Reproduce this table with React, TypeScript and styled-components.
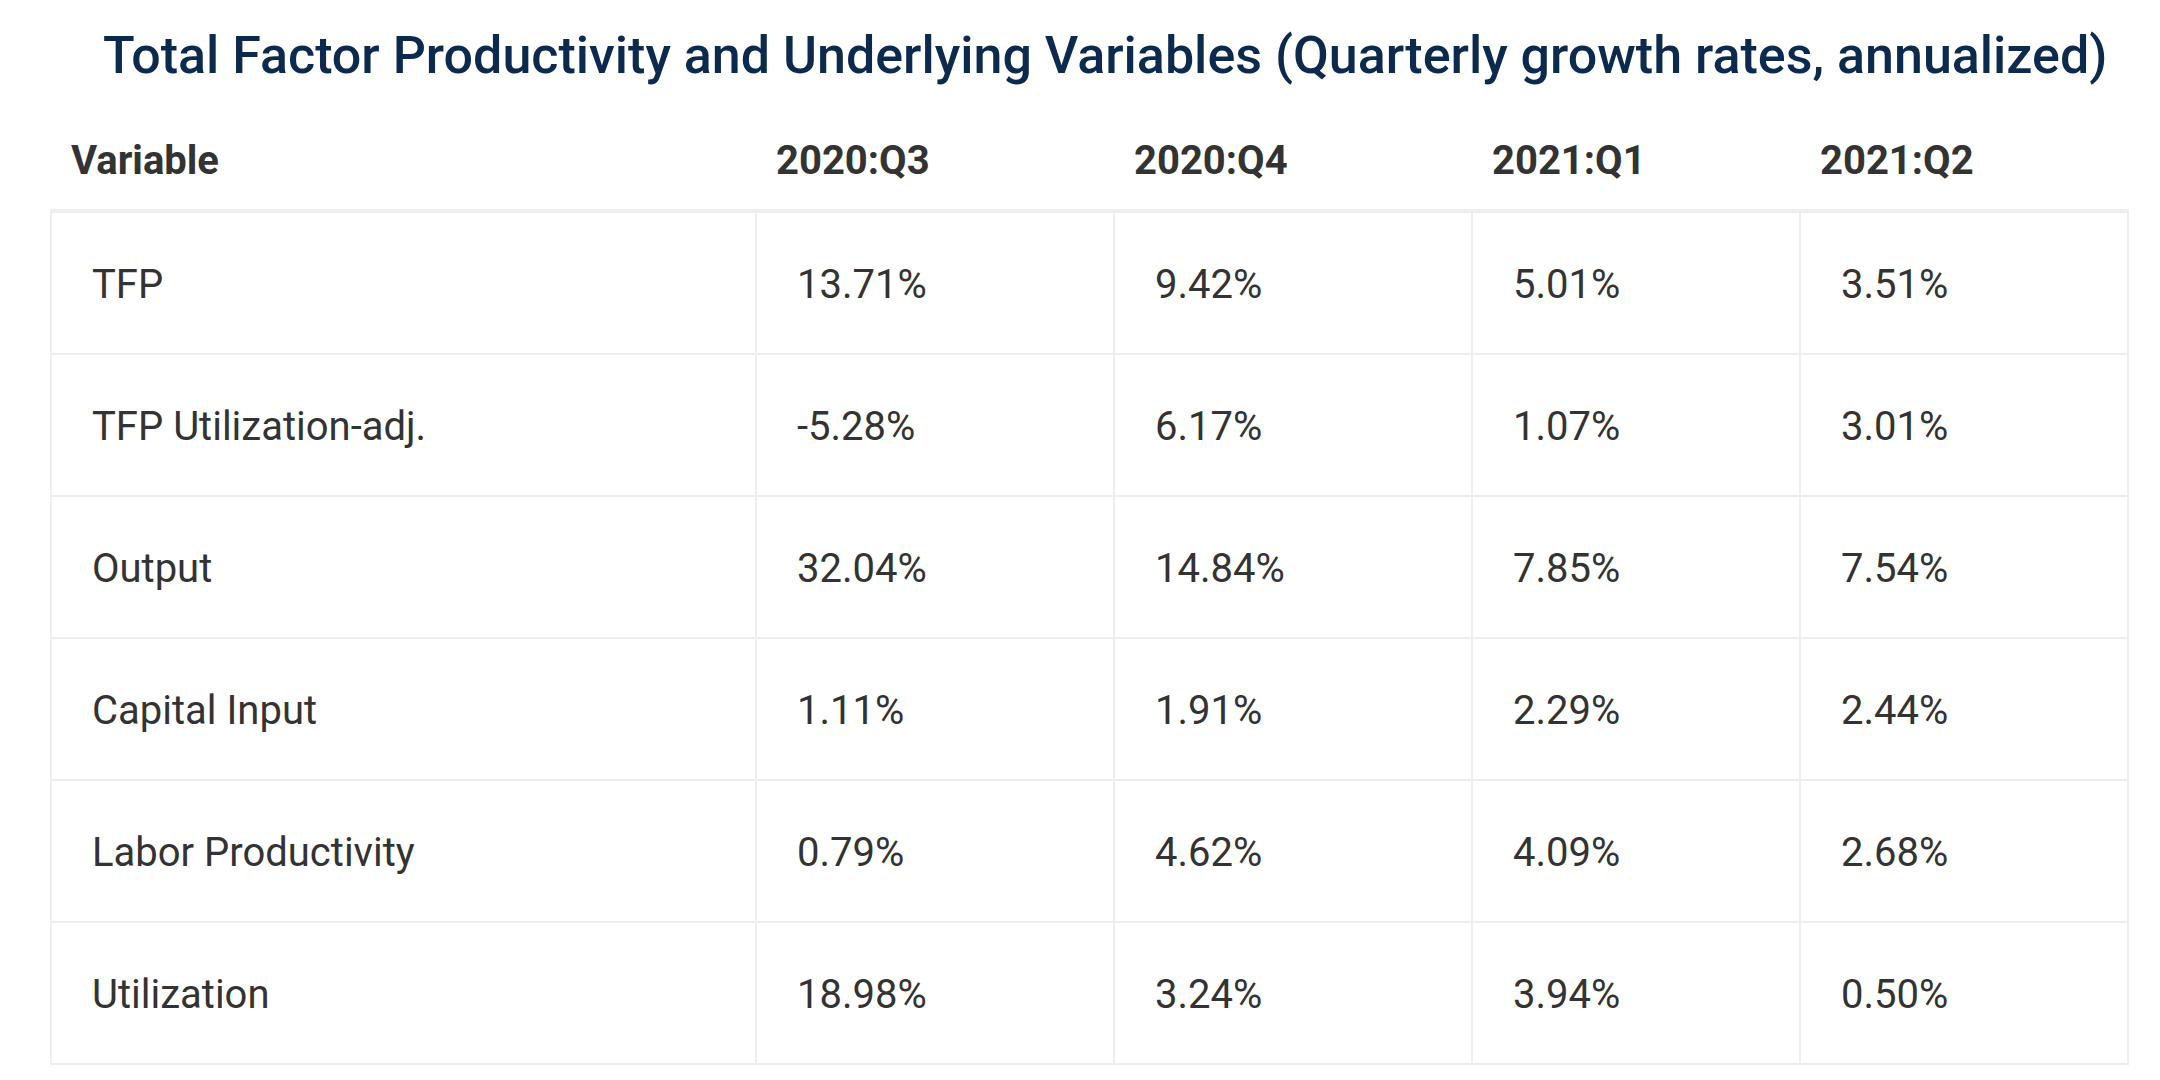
import styled, { createGlobalStyle } from "styled-components";

type Row = { name: string; values: string[] };

const quarters = ["2020:Q3", "2020:Q4", "2021:Q1", "2021:Q2"];

const rows: Row[] = [
  { name: "TFP", values: ["13.71%", "9.42%", "5.01%", "3.51%"] },
  { name: "TFP Utilization-adj.", values: ["-5.28%", "6.17%", "1.07%", "3.01%"] },
  { name: "Output", values: ["32.04%", "14.84%", "7.85%", "7.54%"] },
  { name: "Capital Input", values: ["1.11%", "1.91%", "2.29%", "2.44%"] },
  { name: "Labor Productivity", values: ["0.79%", "4.62%", "4.09%", "2.68%"] },
  { name: "Utilization", values: ["18.98%", "3.24%", "3.94%", "0.50%"] },
];

// column widths measured off the table grid
const colWidths = [705, 358, 358, 328, 328];

const GlobalStyle = createGlobalStyle`
  html, body {
    margin: 0;
    padding: 0;
    background: #ffffff;
  }
  body {
    font-family: Roboto, "Liberation Sans", Arial, sans-serif;
  }
`;

const Page = styled.div`
  padding: 0 33px 0 50px;
  width: 2077px;
`;

const Title = styled.h1`
  margin: 0;
  padding-left: 53px;
  font-size: 52px;
  line-height: 112px;
  font-weight: 500;
  color: #0c2a4e;
  white-space: nowrap;
`;

const Table = styled.table`
  width: 2077px;
  table-layout: fixed;
  border-collapse: collapse;
  color: #333333;
`;

const HeadCell = styled.th`
  height: 97px;
  padding: 0 0 0 20px;
  text-align: left;
  font-size: 40px;
  font-weight: 700;
  border-bottom: 4px solid #eeeeee;
`;

const Cell = styled.td`
  height: 137px;
  padding: 3px 0 0 40px;
  font-size: 40px;
  font-weight: 400;
  border: 2px solid #eeeeee;
  white-space: nowrap;
`;

export default function App() {
  return (
    <>
      <GlobalStyle />
      <Page>
        <Title>
          Total Factor Productivity and Underlying Variables (Quarterly growth rates, annualized)
        </Title>
        <Table>
          <colgroup>
            {colWidths.map((w, i) => (
              <col key={i} style={{ width: w }} />
            ))}
          </colgroup>
          <thead>
            <tr>
              <HeadCell>Variable</HeadCell>
              {quarters.map((q) => (
                <HeadCell key={q}>{q}</HeadCell>
              ))}
            </tr>
          </thead>
          <tbody>
            {rows.map((row) => (
              <tr key={row.name}>
                <Cell>{row.name}</Cell>
                {row.values.map((v, i) => (
                  <Cell key={i}>{v}</Cell>
                ))}
              </tr>
            ))}
          </tbody>
        </Table>
      </Page>
    </>
  );
}
